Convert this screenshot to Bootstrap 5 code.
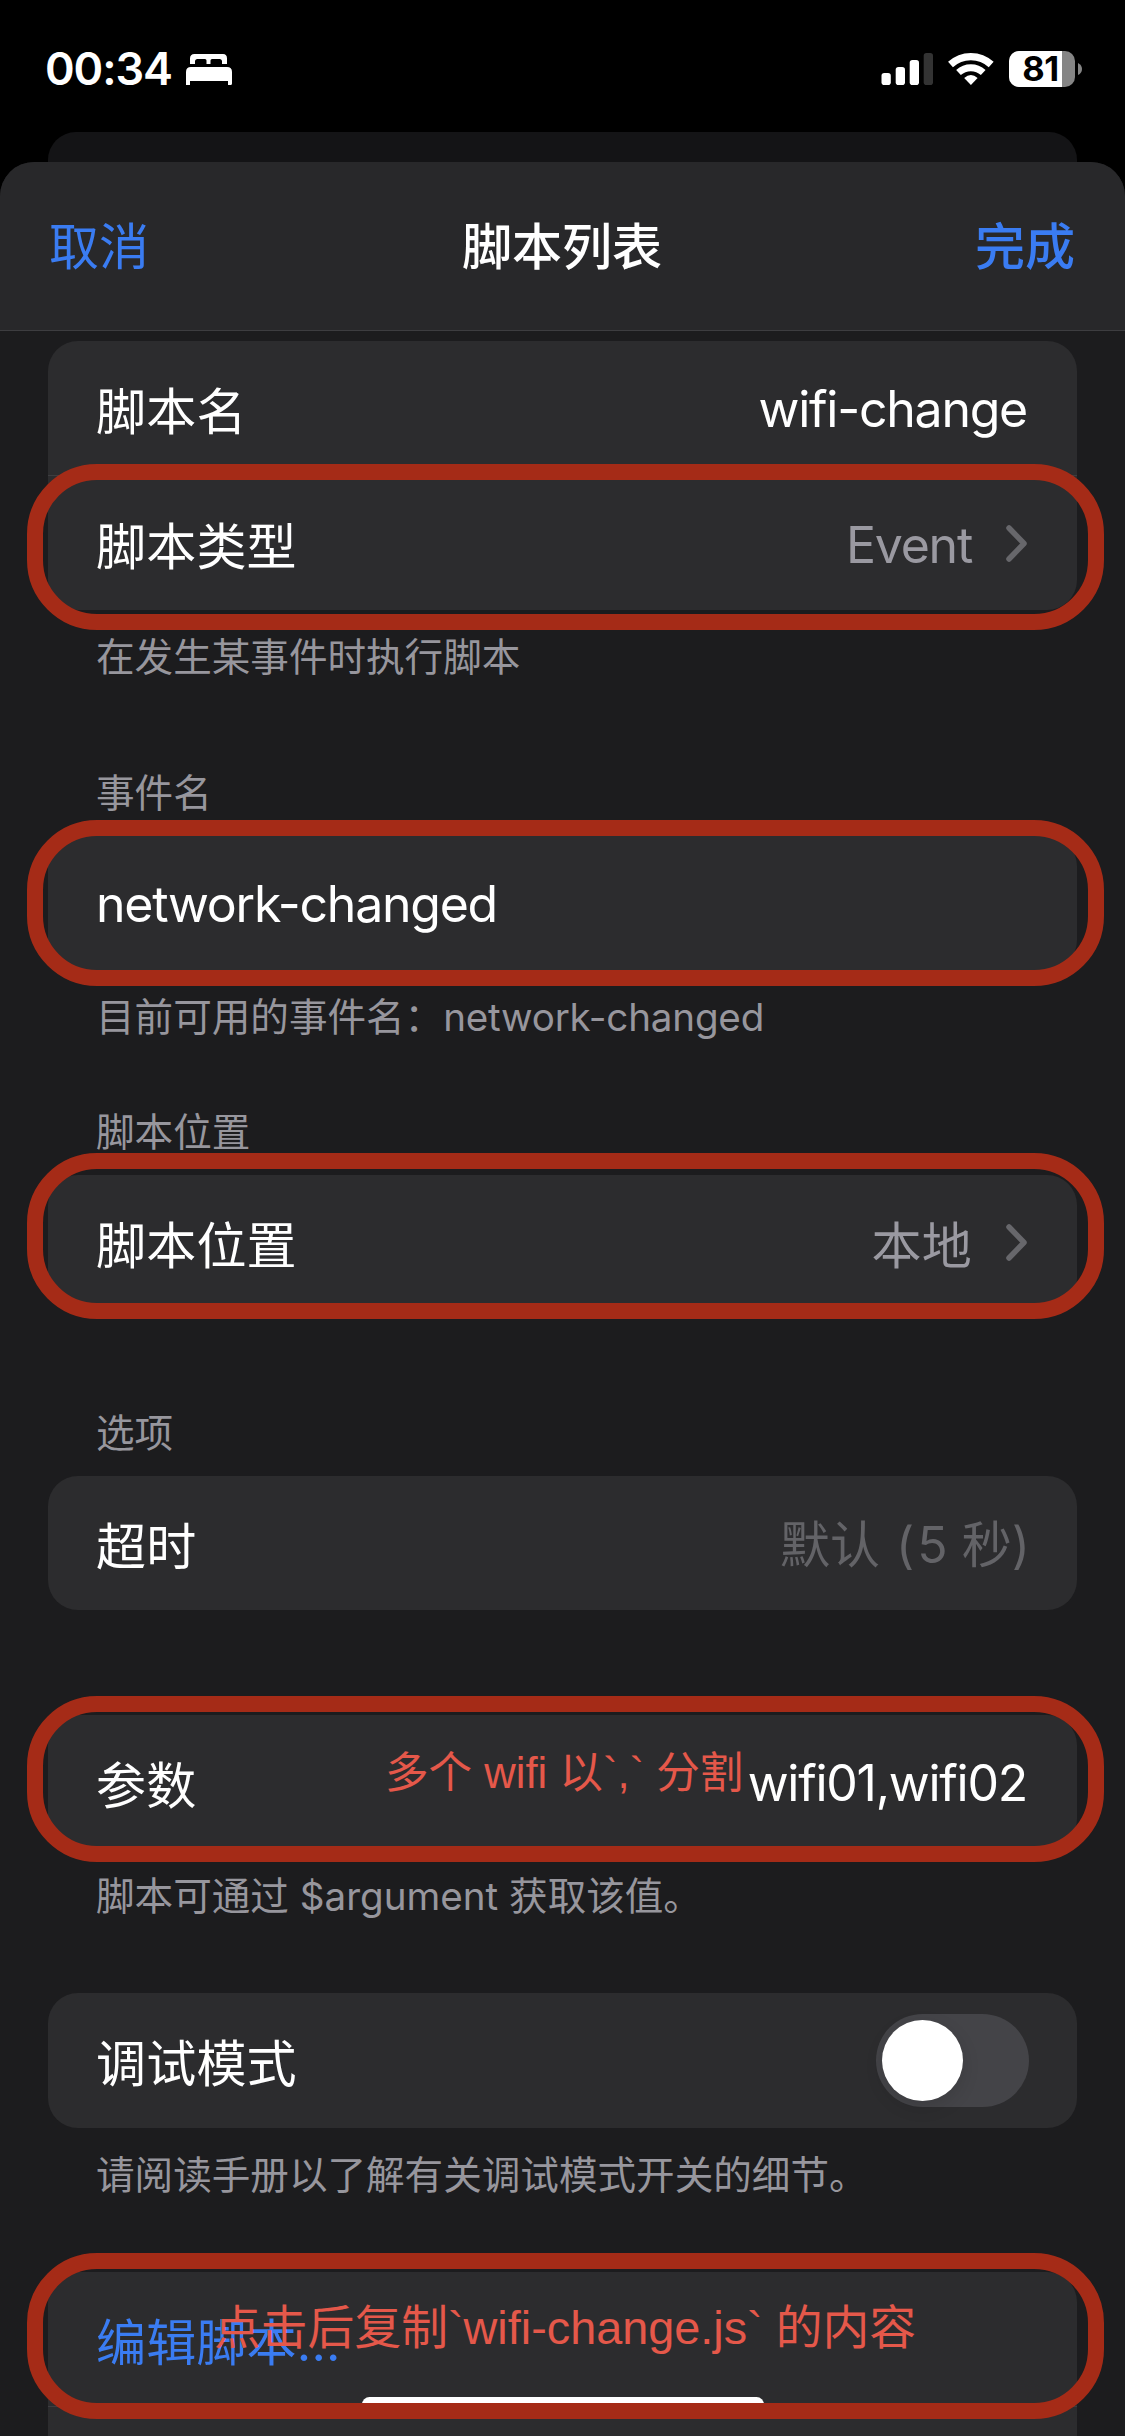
<!DOCTYPE html>
<html lang="zh-CN" data-bs-theme="dark">
<head>
<meta charset="utf-8">
<meta name="viewport" content="width=device-width, initial-scale=1">
<title>脚本列表</title>
<link href="https://cdn.jsdelivr.net/npm/bootstrap@5.3.0/dist/css/bootstrap.min.css" rel="stylesheet">
<style>
  body { background: #000; color: #fff; font-family: Inter, "Noto Sans CJK SC", sans-serif; font-size: 50px; line-height: 60px; height: 2436px; overflow: hidden; }
  .status { height: 132px; padding: 33px 43px 0 45px; }
  .clock { font-size: 45px; font-weight: 600; letter-spacing: -1.1px; line-height: 72px; }
  .bed { margin-left: 14px; }
  .backsheet { height: 30px; margin: 0 48px; background: #141416; border-radius: 28px 28px 0 0; }
  .sheet { height: 2274px; background: #1c1c1e; border-radius: 34px 34px 0 0; overflow: hidden; }
  .topbar { height: 169px; padding: 2px 50px 0 49px; background: #28282a; border-bottom: 1px solid #3d3d40; }
  .topbar > * { flex: 1 1 0; }
  .act { color: #3a7cf2; text-decoration: none; }
  .panel { background: #2c2c2e; border-radius: 30px; margin: 0 48px; }
  .line-item { height: 134px; padding: 0 50px 0 48px; white-space: nowrap; }
  .line-item + .line-item { border-top: 1px solid #3d3d40; height: 135px; }
  .cjk { padding-top: 7px; font-size: 50px; letter-spacing: .2px; }
  .latin { letter-spacing: -1.25px; padding-top: 1px; }
  .dim { color: #9a99a1; }
  .faint { color: #636367; padding-top: 4px; }
  .paren-open { margin: 0 3px 0 2px; }
  .paren-close { margin-right: -3px; }
  .note { font-size: 38.6px; line-height: 46px; color: #97969d; padding-left: 96px; white-space: nowrap; }
  .tight { letter-spacing: -.2px; }
  .ring { left: -21px; right: -27px; height: 166px; border: 16px solid #a52b17; border-radius: 70px; pointer-events: none; }
  .hint { color: #e5584a; font-family: "Liberation Sans", "Noto Sans CJK SC", sans-serif; white-space: nowrap; }
  .chev { width: 21px; height: 37px; margin-left: 34px; }
  .toggle { width: 153px; height: 93px; border-radius: 47px; background: #444448; padding: 6px; margin-right: -2px; }
  .knob { width: 81px; height: 81px; border-radius: 50%; background: #fff; box-shadow: 0 6px 18px rgba(0,0,0,.12); }
  .homebar { width: 402px; height: 15px; border-radius: 8px; background: #fff; }
</style>
<script src="https://cdn.jsdelivr.net/npm/bootstrap@5.3.0/dist/js/bootstrap.bundle.min.js"></script>
</head>
<body class="position-relative">
<div class="status d-flex align-items-start justify-content-between">
  <div class="d-flex align-items-center">
    <span class="clock">00:34</span>
    <svg class="bed" width="46" height="31" viewBox="0 0 46 31" fill="#fff"><path d="M4 10V4.500Q4 0 8.500 0H37Q41 0 41 4.500V10H36V7.500Q36 5 33.500 5H26Q24.500 5 24.500 6.500V10H20.500V6.500Q20.500 5 19 5H11.500Q9 5 9 7.500V10Z"/><path d="M0 31V18Q0 13 5 13H41Q46 13 46 18V29.500Q46 31 44.500 31H42V27H4V31Z"/></svg>
  </div>
  <div class="d-flex" style="padding-top:18px">
    <svg class="overflow-visible" width="201" height="36" viewBox="881 51 201 36">
      <g fill="#fff"><rect x="881.500" y="73" width="9.300" height="12" rx="2.800"/><rect x="895.700" y="67" width="9.300" height="18" rx="2.800"/><rect x="909.700" y="60" width="9.300" height="25" rx="2.800"/><rect x="923.700" y="53" width="9.300" height="32" rx="2.800" fill="#333"/></g>
      <g fill="none" stroke="#fff"><path d="M950.500 64.500A30 30 0 0 1 991.200 64.500" stroke-width="7.200"/><path d="M958.500 72.500A18.500 18.500 0 0 1 983.200 72.500" stroke-width="7"/></g>
      <path d="M970.900 85 964.200 78Q970.900 72 977.600 78Z" fill="#fff"/>
      <clipPath id="cell"><rect x="1009" y="51" width="66" height="36" rx="10"/></clipPath>
      <g clip-path="url(#cell)"><rect x="1009" y="51" width="66" height="36" fill="#858585"/><rect x="1009" y="51" width="53" height="36" fill="#fff"/></g>
      <path d="M1078 63Q1082 65 1082 69T1078 75Z" fill="#858585"/>
      <text x="1040.500" y="81" text-anchor="middle" font-family="Inter" font-weight="700" font-size="34.500" letter-spacing="-.5">81</text>
    </svg>
  </div>
</div>
<div class="backsheet"></div>
<main class="sheet">
  <header class="topbar d-flex align-items-center">
    <a class="act" href="#">取消</a>
    <span class="text-center fw-medium">脚本列表</span>
    <a class="act text-end fw-medium" href="#">完成</a>
  </header>

  <section class="panel position-relative" style="margin-top:10px">
    <div class="line-item d-flex align-items-center justify-content-between"><span class="cjk">脚本名</span><span class="latin">wifi-change</span></div>
    <div class="line-item d-flex align-items-center"><span class="cjk me-auto">脚本类型</span><span class="latin dim pt-1">Event</span><svg class="chev" viewBox="0 0 21 37" fill="none" stroke="#67676b" stroke-width="5.500" stroke-linecap="round" stroke-linejoin="round"><path d="M3 3 18 18.500 3 34"/></svg></div>
    <div class="ring position-absolute" style="top:123px"></div>
  </section>
  <p class="note mb-0" style="margin-top:24px">在发生某事件时执行脚本</p>

  <p class="note mb-0" style="margin-top:90px">事件名</p>
  <section class="panel position-relative" style="margin-top:20px">
    <div class="line-item d-flex align-items-center"><span class="latin">network-changed</span></div>
    <div class="ring position-absolute" style="top:-16px"></div>
  </section>
  <p class="note mb-0" style="margin-top:24px">目前可用的事件名：<span class="tight">network-changed</span></p>

  <p class="note mb-0" style="margin-top:69px">脚本位置</p>
  <section class="panel position-relative" style="margin-top:20px">
    <div class="line-item d-flex align-items-center"><span class="cjk me-auto">脚本位置</span><span class="cjk dim">本地</span><svg class="chev" viewBox="0 0 21 37" fill="none" stroke="#67676b" stroke-width="5.500" stroke-linecap="round" stroke-linejoin="round"><path d="M3 3 18 18.500 3 34"/></svg></div>
    <div class="ring position-absolute" style="top:-22px"></div>
  </section>

  <p class="note mb-0" style="margin-top:101px">选项</p>
  <section class="panel" style="margin-top:20px">
    <div class="line-item d-flex align-items-center justify-content-between"><span class="cjk">超时</span><span class="faint">默认 <span class="paren-open">(</span>5 秒<span class="paren-close">)</span></span></div>
  </section>

  <section class="panel position-relative" style="margin-top:105px">
    <div class="line-item d-flex align-items-center justify-content-between"><span class="cjk">参数</span><span class="latin">wifi01,wifi02</span></div>
    <div class="ring position-absolute" style="top:-19px"></div>
    <div class="hint position-absolute" style="left:337px;top:28px;font-size:43.6px">多个 wifi 以`,` 分割</div>
  </section>
  <p class="note mb-0" style="margin-top:24px">脚本可通过 $argument 获取该值。</p>

  <section class="panel" style="margin-top:74px">
    <div class="line-item d-flex align-items-center justify-content-between" style="height:135px"><span class="cjk">调试模式</span><div class="toggle"><div class="knob"></div></div></div>
  </section>
  <p class="note mb-0" style="margin-top:24px">请阅读手册以了解有关调试模式开关的细节。</p>

  <section class="panel position-relative" style="margin-top:74px">
    <div class="line-item d-flex align-items-center"><a class="act cjk" href="#">编辑脚本...</a></div>
    <div class="line-item"></div>
    <div class="hint position-absolute" style="left:166px;top:26px;font-size:46.8px">点击后复制`wifi-change.js` 的内容</div>
    <div class="homebar position-absolute" style="left:314px;top:125px"></div>
    <div class="ring position-absolute" style="top:-19px"></div>
  </section>
</main>
</body>
</html>
